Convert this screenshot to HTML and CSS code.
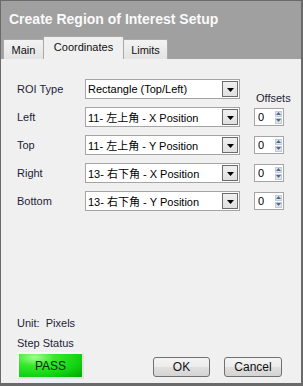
FILE: index.html
```html
<!DOCTYPE html>
<html lang="en">

<head>
    <meta charset="UTF-8">
    <meta name="viewport" content="width=device-width, initial-scale=1.0">
    <title>Create Region of Interest Setup</title>
    <link rel="stylesheet" href="styles.css">
</head>

<body>
    <div class="window">
        <div class="titlebar">Create Region of Interest Setup</div>

        <div class="tabs">
            <div class="tab tab-main">Main</div>
            <div class="tab tab-coords active">Coordinates</div>
            <div class="tab tab-limits">Limits</div>
        </div>

        <div class="panel">
            <div class="rows">
                <label>ROI Type</label>
                <div class="combo">
                    <span>Rectangle (Top/Left)</span>
                    <div class="drop"><svg width="7" height="4" viewBox="0 0 7 4"><path d="M0 0h7L3.5 4z" fill="#000"/></svg></div>
                </div>
                <div class="offsets">Offsets</div>

                <label>Left</label>
                <div class="combo">
                    <span>11- 左上角 - X Position</span>
                    <div class="drop"><svg width="7" height="4" viewBox="0 0 7 4"><path d="M0 0h7L3.5 4z" fill="#000"/></svg></div>
                </div>
                <div class="spin">
                    <span>0</span>
                    <div class="arrows">
                        <div class="up"><svg width="5" height="3" viewBox="0 0 5 3"><path d="M0 3h5L2.5 0z" fill="#4c6a8c"/></svg></div>
                        <div class="down"><svg width="5" height="3" viewBox="0 0 5 3"><path d="M0 0h5L2.5 3z" fill="#4c6a8c"/></svg></div>
                    </div>
                </div>

                <label>Top</label>
                <div class="combo">
                    <span>11- 左上角 - Y Position</span>
                    <div class="drop"><svg width="7" height="4" viewBox="0 0 7 4"><path d="M0 0h7L3.5 4z" fill="#000"/></svg></div>
                </div>
                <div class="spin">
                    <span>0</span>
                    <div class="arrows">
                        <div class="up"><svg width="5" height="3" viewBox="0 0 5 3"><path d="M0 3h5L2.5 0z" fill="#4c6a8c"/></svg></div>
                        <div class="down"><svg width="5" height="3" viewBox="0 0 5 3"><path d="M0 0h5L2.5 3z" fill="#4c6a8c"/></svg></div>
                    </div>
                </div>

                <label>Right</label>
                <div class="combo">
                    <span>13- 右下角 - X Position</span>
                    <div class="drop"><svg width="7" height="4" viewBox="0 0 7 4"><path d="M0 0h7L3.5 4z" fill="#000"/></svg></div>
                </div>
                <div class="spin">
                    <span>0</span>
                    <div class="arrows">
                        <div class="up"><svg width="5" height="3" viewBox="0 0 5 3"><path d="M0 3h5L2.5 0z" fill="#4c6a8c"/></svg></div>
                        <div class="down"><svg width="5" height="3" viewBox="0 0 5 3"><path d="M0 0h5L2.5 3z" fill="#4c6a8c"/></svg></div>
                    </div>
                </div>

                <label>Bottom</label>
                <div class="combo">
                    <span>13- 右下角 - Y Position</span>
                    <div class="drop"><svg width="7" height="4" viewBox="0 0 7 4"><path d="M0 0h7L3.5 4z" fill="#000"/></svg></div>
                </div>
                <div class="spin">
                    <span>0</span>
                    <div class="arrows">
                        <div class="up"><svg width="5" height="3" viewBox="0 0 5 3"><path d="M0 3h5L2.5 0z" fill="#4c6a8c"/></svg></div>
                        <div class="down"><svg width="5" height="3" viewBox="0 0 5 3"><path d="M0 0h5L2.5 3z" fill="#4c6a8c"/></svg></div>
                    </div>
                </div>
            </div>

            <div class="footer">
                <div class="unit">Unit:&nbsp; Pixels</div>
                <div class="status-label">Step Status</div>
                <div class="bottom-row">
                    <div class="pass">PASS</div>
                    <button class="btn btn-ok">OK</button>
                    <button class="btn btn-cancel">Cancel</button>
                </div>
            </div>
        </div>
    </div>
</body>

</html>
```

FILE: styles.css
```css
body {
    margin: 0;
    font-family: "Liberation Sans", Arial, "Noto Sans CJK SC", sans-serif;
    font-size: 11px;
    color: #1e1e3a;
}

.window {
    width: 303px;
    height: 386px;
    box-sizing: border-box;
    border: 1px solid #6a6a6a;
    border-right-width: 2px;
    border-bottom-width: 3px;
    background: #a0a0a0;
    display: flex;
    flex-direction: column;
}

.titlebar {
    height: 35px;
    padding-left: 8px;
    display: flex;
    align-items: center;
    color: #fafafa;
    font-weight: bold;
    font-size: 14px;
}

/* tab strip */
.tabs {
    height: 23px;
    padding-left: 2px;
    display: flex;
    align-items: flex-end;
}

.tab {
    height: 20px;
    box-sizing: border-box;
    border: 1px solid #a9a9a9;
    border-bottom: none;
    border-radius: 2px 2px 0 0;
    background: linear-gradient(#f3f3f3, #e3e3e3);
    color: #111;
    display: flex;
    align-items: center;
    justify-content: center;
}

.tab-main {
    width: 41px;
}

.tab-coords {
    width: 81px;
    margin-left: -1px;
}

.tab-limits {
    width: 45px;
    margin-left: -1px;
}

.tab.active {
    height: 23px;
    background: #f0f0f0;
    padding-bottom: 2px;
}

/* tab page */
.panel {
    flex: 1;
    background: #f0f0f0;
    padding: 20px 0 4px 16px;
    display: flex;
    flex-direction: column;
}

.rows {
    display: grid;
    grid-template-columns: 54px 155px 30px;
    grid-auto-rows: 20px;
    column-gap: 14px;
    row-gap: 8px;
    align-items: center;
}

.offsets {
    align-self: end;
    margin-bottom: -5px;
    padding-left: 2px;
    white-space: nowrap;
}

.combo {
    height: 20px;
    box-sizing: border-box;
    border: 1px solid #a5a5a5;
    background: #fff;
    padding-left: 2px;
    display: flex;
    align-items: center;
    color: #000;
}

.combo span {
    flex: 1;
    white-space: nowrap;
    overflow: hidden;
}

.drop {
    width: 16px;
    height: 16px;
    box-sizing: border-box;
    margin-right: 1px;
    border: 1px solid #6c6c6c;
    background: linear-gradient(#f0f0f0, #e0e0e0);
    display: flex;
    align-items: center;
    justify-content: center;
    padding-top: 2px;
}

.spin {
    height: 18px;
    box-sizing: border-box;
    border: 1px solid #a5a5a5;
    background: #fff;
    padding: 2px 1px 2px 3px;
    display: flex;
    align-items: center;
    color: #000;
}

.spin span {
    flex: 1;
}

.arrows {
    width: 7px;
    height: 13px;
    display: flex;
    flex-direction: column;
    gap: 1px;
}

.arrows div {
    flex: 1;
    background: #dfe5ec;
    border: 1px solid #c3ccd6;
    box-sizing: border-box;
    display: flex;
    align-items: center;
    justify-content: center;
}

/* footer */
.footer {
    margin-top: auto;
}

.unit,
.status-label {
    height: 14px;
    line-height: 14px;
}

.unit {
    margin-bottom: 6px;
}

.status-label {
    margin-bottom: 2px;
}

.bottom-row {
    display: flex;
    align-items: flex-end;
}

.pass {
    width: 67px;
    height: 27px;
    box-sizing: border-box;
    border: 2px solid #f7f7f7;
    border-right-color: #e2e2e2;
    border-bottom-color: #e2e2e2;
    background: radial-gradient(ellipse at 25% 15%, #a6fb96 0, #35ea2a 30%, #14d414 65%, #02a802 100%);
    color: #0b260b;
    font-size: 12px;
    display: flex;
    align-items: center;
    justify-content: center;
}

.btn {
    height: 20px;
    margin-bottom: 2px;
    box-sizing: border-box;
    border: 1px solid #707070;
    border-radius: 3px;
    background: linear-gradient(#f4f4f4 0%, #ececec 48%, #dfdfdf 52%, #d4d4d4 100%);
    font-family: inherit;
    font-size: 12px;
    color: #111;
    padding: 0;
}

.btn-ok {
    width: 57px;
    margin-left: 69px;
}

.btn-cancel {
    width: 58px;
    margin-left: 14px;
}
```
